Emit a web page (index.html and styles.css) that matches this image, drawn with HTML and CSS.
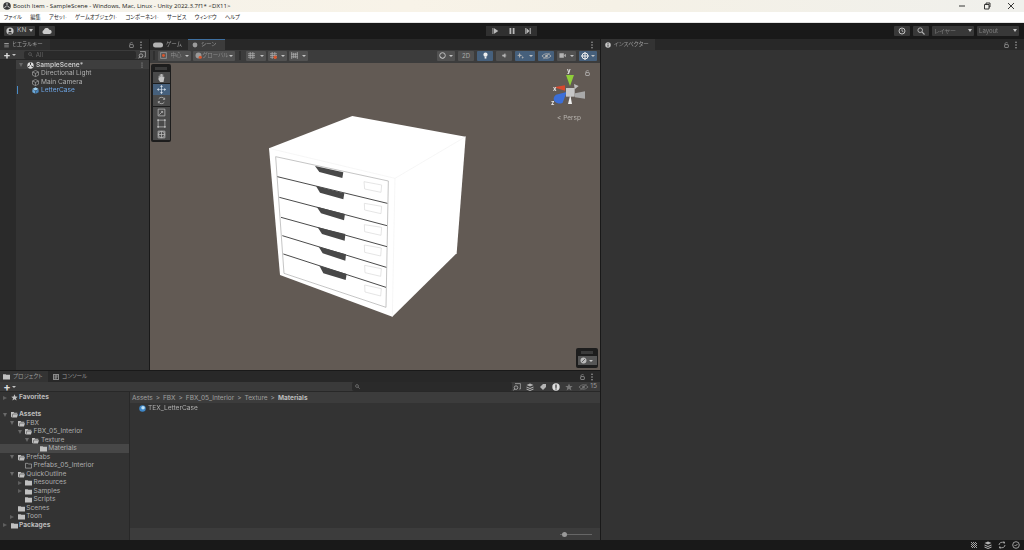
FILE: index.html
```html
<!DOCTYPE html>
<html lang="ja">
<head>
<meta charset="utf-8">
<title>Booth Item - SampleScene</title>
<link rel="stylesheet" href="styles.css">
</head>
<body>
<svg class="defs" width="0" height="0">
  <symbol id="folder" viewBox="0 0 8 7"><path d="M0 .8h3l.8.8H8V7H0z"/></symbol>
  <symbol id="folder-open" viewBox="0 0 8 7"><path d="M0 .6h3l.7.8h3.500v1.200H2L.8 6.600H0zM2.400 3.300H8L6.800 6.800H1.200z"/></symbol>
  <symbol id="folder-line" viewBox="0 0 8 7"><path d="M.5 1h2.600l.7.8h3.700v4.700H.5z" fill="none" stroke="currentColor" stroke-width=".7"/></symbol>
  <symbol id="cube" viewBox="0 0 8 8"><path d="M4 .5 7.400 2.200v3.700L4 7.600.6 5.900V2.200zM.6 2.200 4 3.900l3.400-1.700M4 3.900v3.700" fill="none" stroke="currentColor" stroke-width=".7"/></symbol>
  <symbol id="cube-solid" viewBox="0 0 8 8"><path d="M4 .4 7.600 2.200 4 4 .4 2.200z" fill="#9fd0f0"/><path d="M.4 2.600 3.800 4.400v3.300L.4 6z" fill="#6aa9dc"/><path d="M7.600 2.600 4.200 4.400v3.300L7.600 6z" fill="#4a86bd"/></symbol>
  <symbol id="unity" viewBox="0 0 8 8"><circle cx="4" cy="4" r="3.600" fill="#ddd"/><path d="M4 .8v2.400M1.200 5.600l2-1.200M6.800 5.600l-2-1.200" stroke="#222" stroke-width="1.100"/></symbol>
  <symbol id="lock" viewBox="0 0 6 7"><path d="M1.200 3V1.900a1.800 1.500 0 0 1 3.400-.5" fill="none" stroke="currentColor" stroke-width=".7"/><rect x=".8" y="3" width="4.400" height="3.500" rx=".5" fill="none" stroke="currentColor" stroke-width=".8"/></symbol>
  <symbol id="dots" viewBox="0 0 2 8"><circle cx="1" cy="1.200" r=".7"/><circle cx="1" cy="4" r=".7"/><circle cx="1" cy="6.800" r=".7"/></symbol>
  <symbol id="search" viewBox="0 0 8 8"><circle cx="3.200" cy="3.200" r="2.300" fill="none" stroke="currentColor"/><path d="m5 5 2.500 2.500" stroke="currentColor" stroke-width="1.100"/></symbol>
  <symbol id="search-box" viewBox="0 0 8 8"><path d="M2 .6h5.400v5.400H6.200M1 6.800" fill="none" stroke="currentColor" stroke-width=".7"/><circle cx="3" cy="4.600" r="1.800" fill="none" stroke="currentColor" stroke-width=".8"/><path d="M1.700 6 .4 7.400" stroke="currentColor" stroke-width=".9"/></symbol>
  <symbol id="eye-off" viewBox="0 0 12 8"><path d="M1 4q5-5 10 0-5 5-10 0z" fill="none" stroke="currentColor" stroke-width=".9"/><circle cx="6" cy="4" r="1.500"/><path d="M2.500 7.500 9.500.5" stroke="currentColor" stroke-width=".9"/></symbol>
  <symbol id="star" viewBox="0 0 8 8"><path d="m4 .4 1.100 2.500 2.600.2-2 1.700.7 2.700L4 6.100 1.600 7.500l.7-2.700-2-1.700 2.600-.2z"/></symbol>
  <symbol id="stack" viewBox="0 0 8 8"><path d="M4 .5 7.500 2 4 3.500.5 2zM.5 3.500 4 5l3.500-1.500v1L4 6 .5 4.500zM.5 5.500 4 7l3.500-1.500v1L4 8 .5 6.500z"/></symbol>
  <symbol id="grid-snap" viewBox="0 0 8 8"><path d="M2.500 0v8M5.500 0v8M0 2h8M0 4h8M0 6h8" stroke="currentColor" stroke-width=".8"/></symbol>
  <symbol id="ladder" viewBox="0 0 8 8"><path d="M.8 0v8M7.200 0v8M3 1v6M5 1v6M0 2.500h8M0 5.500h8" stroke="currentColor" stroke-width=".8"/></symbol>
</svg>

<header class="title-bar">
  <svg class="title-logo" viewBox="0 0 8 8"><circle cx="4" cy="4" r="3.800" fill="#3a3a3a"/><path d="M4 1v2.400M1.400 5.500l2.100-1.300M6.600 5.500 4.500 4.200" stroke="#eee" stroke-width=".9"/></svg>
  <span class="title-text">Booth Item - SampleScene - Windows, Mac, Linux - Unity 2022.3.7f1* &lt;DX11&gt;</span>
  <div class="win-controls">
    <svg class="win-btn" viewBox="0 0 8 8"><path d="M1 4h6"/></svg>
    <svg class="win-btn" viewBox="0 0 8 8"><path d="M1.500 2.500h4.500v4.500h-4.500zM3 2.500V1h4v4H6"/></svg>
    <svg class="win-btn" viewBox="0 0 8 8"><path d="m1 1 6 6M7 1 1 7"/></svg>
  </div>
</header>

<nav class="menu-bar">
  <span>ファイル</span><span>編集</span><span>アセット</span><span>ゲームオブジェクト</span><span>コンポーネント</span><span>サービス</span><span>ウィンドウ</span><span>ヘルプ</span>
</nav>

<div class="main-toolbar">
  <div class="tb-left">
    <div class="tb-btn account">
      <svg class="ico8" viewBox="0 0 8 8"><circle cx="4" cy="4" r="3.600" fill="#c8c8c8"/><circle cx="4" cy="3" r="1.300" fill="#333"/><path d="M1.800 6.500a2.300 2 0 0 1 4.400 0z" fill="#333"/></svg>
      <span>KN</span><i class="caret"></i>
    </div>
    <div class="tb-btn cloud">
      <svg class="ico-cloud" viewBox="0 0 10 6"><path d="M2.200 6a2 2 0 0 1-.3-3.900 2.800 2.800 0 0 1 5.400-.3A2.100 2.100 0 0 1 7.800 6z"/></svg>
    </div>
  </div>
  <div class="play-group">
    <div class="play-btn"><svg class="ico8" viewBox="0 0 8 8"><path d="M1.500 1h.7v6h-.7zM2.800 1v6l4.500-3z"/></svg></div>
    <div class="play-btn"><svg class="ico8" viewBox="0 0 8 8"><path d="M1.500 1h1.800v6H1.500zM4.700 1h1.800v6H4.700z"/></svg></div>
    <div class="play-btn"><svg class="ico8" viewBox="0 0 8 8"><path d="M1 1h.7v6H1zM2.400 1v6l3-3zM5.700 1h1v6h-1z"/></svg></div>
  </div>
  <div class="tb-right">
    <div class="tb-btn hist"><svg class="ico8" viewBox="0 0 8 8"><circle cx="4" cy="4" r="3" fill="none" stroke="#ccc" stroke-width=".9"/><path d="M4 2.200V4l1.400.9" fill="none" stroke="#ccc" stroke-width=".8"/></svg></div>
    <div class="tb-btn hist"><svg class="ico8 soft" viewBox="0 0 8 8"><use href="#search"/></svg></div>
    <div class="tb-btn select"><span>レイヤー</span><i class="caret"></i></div>
    <div class="tb-btn select"><span>Layout</span><i class="caret"></i></div>
  </div>
</div>

<main class="workspace">
  <div class="left-col">
    <div class="top-row">
      <section class="hierarchy">
        <div class="tabs">
          <div class="tab tab-hier"><span class="tab-glyph">☰</span>ヒエラルキー</div>
          <div class="tab-tools">
            <svg class="lock"><use href="#lock"/></svg>
            <svg class="dots"><use href="#dots"/></svg>
          </div>
        </div>
        <div class="hier-search">
          <span class="plus">+</span><i class="caret small"></i>
          <div class="search-field"><svg class="ico5"><use href="#search"/></svg><span>All</span></div>
          <svg class="ico8 soft"><use href="#search-box"/></svg>
        </div>
        <div class="hier-tree">
          <div class="hier-scene">
            <i class="arrow down"></i>
            <svg class="ico7"><use href="#unity"/></svg>
            <b>SampleScene*</b>
            <svg class="dots scene-dots"><use href="#dots"/></svg>
          </div>
          <div class="hier-row"><svg class="ico7"><use href="#cube"/></svg>Directional Light</div>
          <div class="hier-row"><svg class="ico7"><use href="#cube"/></svg>Main Camera</div>
          <div class="hier-row active"><svg class="ico7"><use href="#cube-solid"/></svg>LetterCase<i class="hier-mark"></i></div>
        </div>
      </section>

      <section class="scene">
        <div class="tabs">
          <div class="tab tab-game"><svg class="ico-game" viewBox="0 0 10 6"><path d="M2.500.5h5a2.500 2.500 0 0 1 0 5h-5a2.500 2.500 0 0 1 0-5z"/></svg>ゲーム</div>
          <div class="tab tab-scene"><svg class="ico6" viewBox="0 0 8 8"><circle cx="4" cy="4" r="3.200"/></svg>シーン</div>
          <div class="tab-tools"><svg class="dots"><use href="#dots"/></svg></div>
        </div>
        <div class="scene-toolbar">
          <i class="grip"></i>
          <div class="st-group">
            <div class="st-btn w33"><svg class="ico7" viewBox="0 0 8 8"><rect x=".8" y=".8" width="6.400" height="6.400" fill="none" stroke="#999"/><circle cx="4" cy="4" r="1.700" fill="#d9572e"/></svg><span>中心</span><i class="caret small"></i></div>
            <div class="st-btn w42"><svg class="ico7" viewBox="0 0 8 8"><circle cx="4" cy="4" r="3.400" fill="#999"/><circle cx="6" cy="6" r="1.800" fill="#d9572e"/></svg><span>グローバル</span><i class="caret small"></i></div>
          </div>
          <i class="grip grip-gap"></i>
          <div class="st-group">
            <div class="st-btn w20"><svg class="ico7 soft"><use href="#grid-snap"/></svg><i class="caret small"></i></div>
            <div class="st-btn w19"><svg class="ico7 soft" viewBox="0 0 8 8"><use href="#grid-snap"/><circle cx="6" cy="6" r="1.900" fill="#d9572e"/></svg><i class="caret small"></i></div>
            <div class="st-btn w19"><svg class="ico7 soft"><use href="#ladder"/></svg><i class="caret small"></i></div>
          </div>
          <div class="st-group st-right">
            <div class="st-btn w18"><svg class="ico7" viewBox="0 0 8 8"><circle cx="4" cy="4" r="3.200" fill="none" stroke="#ccc"/><path d="M1 4.500a3 3 0 0 0 5.500 1.500 4 4 0 0 1-5.500-1.500z" fill="#ccc"/></svg><i class="caret small"></i></div>
            <div class="st-btn w16 text2d">2D</div>
            <div class="st-btn w16 on"><svg class="ico7" viewBox="0 0 8 8"><circle cx="4" cy="3" r="2.400" fill="#eee"/><rect x="3" y="5.200" width="2" height="2.300" fill="#eee"/></svg></div>
            <div class="st-btn w16"><svg class="ico5 soft" viewBox="0 0 8 8"><path d="M1 3h1.500L5 1v6L2.500 5H1zM6 2.500v3" stroke="currentColor"/></svg></div>
            <div class="st-btn w20 on"><svg class="ico7 soft" viewBox="0 0 8 8"><path d="M3 .5 3.800 3l2.500.8-2.500.8L3 7l-.8-2.400L0 3.800 2.200 3zM6.500 4.500l.5 1.200 1 .5-1 .5-.5 1.300-.5-1.300-1-.5 1-.5z"/></svg><i class="caret small"></i></div>
            <div class="st-btn w16 on"><svg class="ico9 soft" viewBox="0 0 12 8"><use href="#eye-off"/></svg></div>
            <div class="st-btn w19"><svg class="ico7 soft" viewBox="0 0 8 8"><path d="M.5 1.500h5v5h-5zM6 3.500 7.800 2v4L6 4.500z"/></svg><i class="caret small"></i></div>
            <div class="st-btn w18 on"><svg class="ico8" viewBox="0 0 8 8"><circle cx="4" cy="4" r="3" fill="none" stroke="#eee"/><path d="M4 0v8M0 4h8" stroke="#eee"/></svg><i class="caret small"></i></div>
          </div>
        </div>
        <div class="scene-view">
          <svg class="scene-art" viewBox="150 63 450 307">
            <g transform="translate(260 110) scale(.33333)">
              <path class="c-body" d="M277 18 617 80 590 430 397 620 60 495 27 115z"/>
              <path class="c-edge" d="M27 115 405 205 617 80M405 205 397 620"/>
              <path class="c-frame" d="M47 140 385 213 378 592 72 490z"/>
              <path class="c-line" d="M52 200 382 280M58 262 381 347M63 322 381 410M67 377 379 472M70 432 378 532"/>
              <path class="c-handle" d="M165 168 250 187 247 204 178 186z"/>
              <path class="c-handle" d="M168 228 253 250 250 268 180 248z"/>
              <path class="c-handle" d="M170 290 255 312 252 331 183 310z"/>
              <path class="c-handle" d="M173 352 256 372 254 392 186 372z"/>
              <path class="c-handle" d="M176 410 258 433 256 452 188 430z"/>
              <path class="c-handle" d="M178 467 260 492 257 510 190 490z"/>
              <path class="c-label" d="M312 215 365 225 363 247 314 237z"/>
              <path class="c-label" d="M313 280 365 289 363 311 314 300z"/>
              <path class="c-label" d="M313 344 365 352 363 376 314 365z"/>
              <path class="c-label" d="M313 405 364 414 362 438 314 427z"/>
              <path class="c-label" d="M314 466 364 476 362 499 315 488z"/>
              <path class="c-label" d="M314 525 364 536 362 558 315 546z"/>
            </g>
            <g transform="translate(530 60) scale(.33333)">
              <path d="M108 45h24l-12 33z" fill="#8fce3a"/>
              <path d="M72 82 105 76 105 92z" fill="#d8492e"/>
              <path d="M110 96 78 104a16 14 0 0 0 20 24z" fill="#3c6fd8"/>
              <path d="M165 94 135 100 135 112 165 116z" fill="#a9a9a9"/>
              <path d="M114 132h12L121 104z" fill="#eee"/>
              <path d="M132 72 146 78 134 88z" fill="#bdbdbd"/>
              <rect x="108" y="84" width="26" height="26" fill="#c6c6c6"/>
            </g>
          </svg>
          <div class="axis axis-y">y</div>
          <div class="axis axis-x">x</div>
          <div class="axis axis-z">z</div>
          <svg class="gizmo-lock"><use href="#lock"/></svg>
          <div class="persp">&lt; Persp</div>
          <div class="tools">
            <i class="tools-grip"></i>
            <div class="tool"><svg class="ico9t" viewBox="0 0 8 8"><path d="M1.500 4V2.500h.7V4h.3V1.200h.8V3.500h.3V.8h.8v2.700h.3V1.200h.8v2.800l.5-.8.6.4L5.800 8H2.700L1.200 5.500z"/></svg></div>
            <div class="tool on"><svg class="ico9t" viewBox="0 0 8 8"><path d="M4 0 5.300 1.500H2.700zM4 8 2.700 6.500h2.600zM0 4l1.500-1.300v2.600zM8 4 6.500 2.700v2.600zM3.700 1.500h.6v5h-.6zM1.500 3.700h5v.6h-5z"/></svg></div>
            <div class="tool"><svg class="ico9t ln" viewBox="0 0 8 8"><path d="M6.800 3A3 3 0 0 0 1.500 2.500M1.200 5A3 3 0 0 0 6.500 5.500M6.800 1.500V3H5.300M1.200 6.500V5h1.500"/></svg></div>
            <div class="tool"><svg class="ico9t ln" viewBox="0 0 8 8"><path d="M1 1h6v6H1z"/><path d="M2 6l3-3M3.500 3H5v1.500"/></svg></div>
            <div class="tool"><svg class="ico9t ln" viewBox="0 0 8 8"><path d="M1 1h6v6H1z"/><path class="corner" d="M.3.3h1.400v1.400H.3zM6.300.3h1.400v1.400H6.300zM.3 6.300h1.400v1.400H.3zM6.300 6.300h1.400v1.400H6.300z"/></svg></div>
            <div class="tool"><svg class="ico9t ln" viewBox="0 0 8 8"><circle cx="4" cy="4" r="2.800"/><path d="M1 1h6v6H1zM4 1v6M1 4h6"/></svg></div>
          </div>
          <div class="orient">
            <i class="tools-grip"></i>
            <div class="orient-btn"><svg class="ico7" viewBox="0 0 8 8"><circle cx="4" cy="4" r="3.400" fill="#bbb"/><path d="M2 6 6 2" stroke="#555"/></svg><i class="caret small"></i></div>
          </div>
        </div>
      </section>
    </div>

    <section class="project">
      <div class="tabs">
        <div class="tab tab-proj"><svg class="ico7 lite"><use href="#folder"/></svg>プロジェクト</div>
        <div class="tab-plain"><svg class="ico6 lite" viewBox="0 0 8 8"><path d="M.5.500h7v7h-7zM2 2.500h4M2 4h4M2 5.500h3" fill="none" stroke="currentColor"/></svg>コンソール</div>
        <div class="tab-tools">
          <svg class="lock"><use href="#lock"/></svg>
          <svg class="dots"><use href="#dots"/></svg>
        </div>
      </div>
      <div class="proj-toolbar">
        <span class="plus">+</span><i class="caret small"></i>
        <div class="proj-search"><svg class="ico5"><use href="#search"/></svg></div>
        <div class="proj-icons">
          <svg class="ico8 soft"><use href="#search-box"/></svg>
          <svg class="ico8 soft"><use href="#stack"/></svg>
          <svg class="ico8 soft" viewBox="0 0 8 8"><path d="M1 4 4 1h3v3L4 7z"/></svg>
          <svg class="ico8" viewBox="0 0 8 8"><circle cx="4" cy="4" r="3.700" fill="#ddd"/><rect x="3.400" y="1.500" width="1.200" height="3.400" fill="#333"/><rect x="3.400" y="5.400" width="1.200" height="1.200" fill="#333"/></svg>
          <svg class="ico8 dim"><use href="#star"/></svg>
          <span class="hidden-count"><svg class="ico9 dim" viewBox="0 0 12 8"><use href="#eye-off"/></svg>15</span>
        </div>
      </div>
      <div class="proj-body">
        <div class="proj-tree">
          <div class="row bold"><i class="arrow"></i><svg class="ico7 lite"><use href="#star"/></svg>Favorites</div>
          <div class="row"></div>
          <div class="row bold"><i class="arrow down"></i><svg class="ico7 lite"><use href="#folder-open"/></svg>Assets</div>
          <div class="row d1"><i class="arrow down"></i><svg class="ico7 lite"><use href="#folder-open"/></svg>FBX</div>
          <div class="row d2"><i class="arrow down"></i><svg class="ico7 lite"><use href="#folder-open"/></svg>FBX_05_Interior</div>
          <div class="row d3"><i class="arrow down"></i><svg class="ico7 lite"><use href="#folder-open"/></svg>Texture</div>
          <div class="row d4 selected"><i class="arrow none"></i><svg class="ico7 lite"><use href="#folder"/></svg>Materials</div>
          <div class="row d1"><i class="arrow down"></i><svg class="ico7 lite"><use href="#folder-open"/></svg>Prefabs</div>
          <div class="row d2"><i class="arrow none"></i><svg class="ico7 lite"><use href="#folder-line"/></svg>Prefabs_05_Interior</div>
          <div class="row d1"><i class="arrow down"></i><svg class="ico7 lite"><use href="#folder-open"/></svg>QuickOutline</div>
          <div class="row d2"><i class="arrow"></i><svg class="ico7 lite"><use href="#folder"/></svg>Resources</div>
          <div class="row d2"><i class="arrow"></i><svg class="ico7 lite"><use href="#folder"/></svg>Samples</div>
          <div class="row d2"><i class="arrow none"></i><svg class="ico7 lite"><use href="#folder"/></svg>Scripts</div>
          <div class="row d1"><i class="arrow none"></i><svg class="ico7 lite"><use href="#folder"/></svg>Scenes</div>
          <div class="row d1"><i class="arrow"></i><svg class="ico7 lite"><use href="#folder"/></svg>Toon</div>
          <div class="row bold"><i class="arrow"></i><svg class="ico7 lite"><use href="#folder"/></svg>Packages</div>
        </div>
        <div class="proj-list">
          <div class="crumbs"><span>Assets</span><i>&gt;</i><span>FBX</span><i>&gt;</i><span>FBX_05_Interior</span><i>&gt;</i><span>Texture</span><i>&gt;</i><b>Materials</b></div>
          <div class="assets">
            <div class="asset"><svg class="ico7" viewBox="0 0 8 8"><circle cx="4" cy="4" r="3.700" fill="#3e86c6"/><circle cx="4.600" cy="3.200" r="2" fill="#bfe2f7"/></svg>TEX_LetterCase</div>
          </div>
          <div class="list-foot"><div class="slider"><i class="slider-knob"></i></div></div>
        </div>
      </div>
    </section>
  </div>

  <section class="inspector">
    <div class="tabs">
      <div class="tab tab-insp"><svg class="ico6" viewBox="0 0 8 8"><circle cx="4" cy="4" r="3.700" fill="#c8c8c8"/><rect x="3.400" y="3.300" width="1.200" height="3" fill="#333"/><rect x="3.400" y="1.600" width="1.200" height="1.100" fill="#333"/></svg>インスペクター</div>
      <div class="tab-tools">
        <svg class="lock"><use href="#lock"/></svg>
        <svg class="dots"><use href="#dots"/></svg>
      </div>
    </div>
    <div class="insp-body"></div>
  </section>
</main>

<footer class="status">
  <svg class="ico8 soft" viewBox="0 0 8 8"><path d="M1 1 7 7M1 3l4 4M3 1l4 4M1 5l2 2M5 1l2 2" stroke="currentColor" stroke-width=".9"/></svg>
  <svg class="ico8 soft"><use href="#stack"/></svg>
  <svg class="ico8 ln-s" viewBox="0 0 8 8"><path d="M1 4a3 3 0 0 1 5-2M7 4a3 3 0 0 1-5 2M5 1h1.500v1.500M3 7H1.500V5.500"/></svg>
  <svg class="ico8 ln-s" viewBox="0 0 8 8"><circle cx="4" cy="4" r="3.300"/><path d="m2.500 4 1 1 2-2"/></svg>
</footer>
</body>
</html>
```

FILE: styles.css
```css
* { box-sizing: border-box; }
html, body { margin: 0; padding: 0; }
body {
  width: 1024px;
  height: 550px;
  overflow: hidden;
  display: flex;
  flex-direction: column;
  background: #191919;
  color: #b4b4b4;
  font-family: "Inter", "Noto Sans CJK JP", sans-serif;
  font-size: 6.600px;
  line-height: 1;
  white-space: nowrap;
  font-feature-settings: "palt";
  filter: blur(.3px);
}
.defs { position: absolute; }
svg { fill: currentColor; flex: none; }

/* window chrome */
.title-bar {
  height: 12px;
  display: flex;
  align-items: center;
  padding-left: 3px;
  color: #222;
  background: linear-gradient(90deg, #f4f2ea 0%, #f8f3e8 40%, #f5f1e6 60%, #f0f0ec 100%);
}
.title-logo { width: 8px; height: 8px; margin-right: 2px; }
.title-text { font-family: "Open Sans", sans-serif; font-size: 6.100px; }
.win-controls { margin-left: auto; display: flex; gap: 16.500px; padding-right: 9px; }
.win-btn { width: 8px; height: 8px; fill: none; stroke: #222; stroke-width: .9; }
.menu-bar {
  height: 11px;
  display: flex;
  align-items: center;
  gap: 8.300px;
  padding-left: 4px;
  background: #fff;
  color: #222;
  font-family: "Noto Sans CJK JP", sans-serif;
  font-size: 5.200px;
  border-bottom: 1px solid #e4e4e4;
}

/* main toolbar */
.main-toolbar {
  height: 16px;
  display: grid;
  grid-template-columns: 1fr auto 1fr;
  align-items: center;
  padding: 0 5px 1px 4px;
  background: #191919;
}
.tb-left { display: flex; gap: 4px; }
.tb-right { display: flex; gap: 3px; justify-content: flex-end; }
.tb-btn {
  height: 10px;
  display: flex;
  align-items: center;
  background: #383838;
  border-radius: 1px;
  color: #bbb;
}
.account { width: 31px; padding-left: 2px; gap: 3px; }
.cloud { width: 16px; justify-content: center; }
.ico-cloud { width: 10px; height: 6px; color: #ccc; }
.hist { width: 16px; justify-content: center; }
.select { width: 42px; padding: 0 2px; justify-content: space-between; font-size: 6px; color: #808080; }
.play-group { display: flex; }
.play-btn {
  width: 16.700px;
  height: 10px;
  display: flex;
  align-items: center;
  justify-content: center;
  background: #303030;
  color: #b8b8b8;
}
.caret {
  width: 0;
  height: 0;
  flex: none;
  border-left: 2.500px solid transparent;
  border-right: 2.500px solid transparent;
  border-top: 3px solid #c4c4c4;
}
.caret.small { border-left-width: 2px; border-right-width: 2px; border-top-width: 2.500px; }

/* icons */
.ico5 { width: 5px; height: 5px; }
.ico6 { width: 6px; height: 6px; }
.ico7 { width: 7px; height: 7px; }
.ico8 { width: 8px; height: 8px; }
.ico9 { width: 11px; height: 8px; }
.ico9t { width: 9px; height: 9px; }
.soft { color: #b4b4b4; }
.lite { color: #c0c0c0; }
.dim { color: #777; }
.ln { fill: none; stroke: #b8b8b8; stroke-width: .7; }
.ln .corner { fill: #b8b8b8; stroke: none; }
.ln-s { fill: none; stroke: #bbb; stroke-width: .8; }
.lock { width: 5px; height: 6px; color: #aaa; }
.dots { width: 2px; height: 8px; color: #bbb; }

/* workspace */
.workspace { height: 501px; display: flex; gap: 1px; }
.left-col { width: 600px; display: flex; flex-direction: column; gap: 1px; }
.top-row { height: 331px; display: flex; gap: 1px; }

.tabs {
  height: 11px;
  flex: none;
  display: flex;
  align-items: stretch;
  background: #282828;
  color: #9c9c9c;
  font-family: "Noto Sans CJK JP", sans-serif;
  font-size: 5.500px;
}
.tab { display: flex; align-items: center; gap: 3px; background: #333; }
.tab-tools { margin-left: auto; display: flex; align-items: center; gap: 6px; padding-right: 7px; }
.tab-glyph { font-size: 5px; color: #999; }

.hierarchy { width: 149px; display: flex; flex-direction: column; background: #333; }
.tab-hier { width: 50px; padding-left: 4px; background: #2e2e2e; }
.hier-search {
  height: 10px;
  display: flex;
  align-items: center;
  padding: 0 3px;
  background: #3b3b3b;
  border-bottom: 1px solid #262626;
}
.plus { width: 8px; font-size: 11px; font-weight: 700; color: #ddd; line-height: 8px; text-align: center; margin-right: 1px; }
.search-field {
  width: 115px;
  height: 8px;
  margin: 0 2px 0 8px;
  display: flex;
  align-items: center;
  gap: 3px;
  padding-left: 4px;
  background: #2a2a2a;
  border-radius: 2px;
  color: #666;
}
.search-field span { font-size: 6px; }
.hier-tree { flex: 1; display: flex; flex-direction: column; background: linear-gradient(90deg, #2a2a2a 16px, #333 16px); }
.hier-scene {
  height: 9px;
  margin-left: 16px;
  display: flex;
  align-items: center;
  gap: 2px;
  padding: 1px 6px 0 2px;
  background: #3e3e3e;
}
.hier-scene b { font-weight: 600; color: #c4c4c4; }
.scene-dots { margin-left: auto; width: 2px; height: 6px; }
.hier-row {
  height: 8.500px;
  margin-left: 16px;
  padding: .6px 0 0 16px;
  display: flex;
  align-items: center;
  gap: 2px;
  color: #b0b0b0;
  position: relative;
}
.hier-row.active { color: #6ea6e6; }
.hier-mark { position: absolute; left: 1px; top: 0; width: 1px; height: 8px; background: #4a8cc7; }
.arrow {
  width: 0;
  height: 0;
  flex: none;
  margin: 0 2px 0 1px;
  border-top: 2.500px solid transparent;
  border-bottom: 2.500px solid transparent;
  border-left: 4px solid #5f5f5f;
}
.arrow.down {
  border-left: 2.500px solid transparent;
  border-right: 2.500px solid transparent;
  border-top: 4px solid #6a6a6a;
  border-bottom: 0;
}
.arrow.none { border: 0; width: 7px; margin: 0; }

/* scene */
.scene { width: 450px; display: flex; flex-direction: column; background: #383838; }
.tab-game { width: 38px; padding-left: 3px; background: transparent; }
.ico-game { width: 10px; height: 6px; color: #b4b4b4; }
.tab-scene { width: 37px; padding-left: 4px; background: #3c3c3c; border-top: 1px solid #3e6fa0; }
.scene-toolbar {
  height: 13px;
  flex: none;
  display: flex;
  align-items: center;
  padding: 0 3px 2px 3px;
  background: #3c3c3c;
  font-family: "Noto Sans CJK JP", sans-serif;
  font-size: 5.500px;
  color: #8c8c8c;
}
.grip { width: 2px; height: 9px; margin-right: 3px; background: #2f2f2f; }
.grip-gap { margin: 0 5px 0 4px; }
.st-group { display: flex; gap: 2px; }
.st-right { margin-left: auto; gap: 3px; }
.st-btn {
  height: 10px;
  display: flex;
  align-items: center;
  justify-content: space-between;
  padding: 0 2px;
  background: #515151;
  border-radius: 1px;
}
.st-btn.on { background: #46607c; }
.text2d { justify-content: center; font-family: "Inter", sans-serif; font-size: 6px; color: #aaa; }
.w16 { width: 16px; justify-content: center; }
.w18 { width: 18px; }
.w19 { width: 19px; }
.w20 { width: 20px; }
.w33 { width: 33px; }
.w42 { width: 42px; }
.scene-view { flex: 1; position: relative; background: #625a54; overflow: hidden; }
.scene-art { display: block; width: 100%; height: 100%; }
.c-body { fill: #fff; }
.c-edge { fill: none; stroke: #f1f1f1; stroke-width: 2; }
.c-frame { fill: none; stroke: #a8a8a8; stroke-width: 2; }
.c-line { fill: none; stroke: #4a4a4a; stroke-width: 3; }
.c-handle { fill: #484848; }
.c-label { fill: #fff; stroke: #d8d8d8; stroke-width: 2; }
.axis { position: absolute; font-size: 6px; font-weight: 700; color: #e8e8e8; }
.axis-y { left: 417px; top: 5px; }
.axis-x { left: 403px; top: 23px; }
.axis-z { left: 401px; top: 37px; }
.gizmo-lock { position: absolute; left: 435px; top: 7px; width: 5px; height: 6px; color: #ccc; }
.persp { position: absolute; left: 407px; top: 52px; font-size: 6.500px; color: #b9b5b0; }
.tools {
  position: absolute;
  left: 1px;
  top: 1px;
  width: 20px;
  height: 78px;
  display: flex;
  flex-direction: column;
  align-items: center;
  gap: .4px;
  padding: 0 1px 1px;
  background: #1d1d1d;
  border-radius: 2px;
}
.tools-grip { width: 12px; height: 3px; margin: 3px 0 2px; background: #3a3a3a; flex: none; }
.tool {
  width: 17px;
  height: 11px;
  flex: none;
  display: flex;
  align-items: center;
  justify-content: center;
  background: #4a4a4a;
  color: #c4c4c4;
}
.tool.on { background: #46607c; color: #dfe8f2; }
.orient {
  position: absolute;
  left: 426px;
  top: 285px;
  width: 22px;
  height: 20px;
  display: flex;
  flex-direction: column;
  align-items: center;
  background: #1d1d1d;
  border-radius: 2px;
}
.orient-btn {
  width: 19px;
  height: 9px;
  display: flex;
  align-items: center;
  gap: 2px;
  padding-left: 2px;
  background: #565656;
}

/* project */
.project { height: 169px; display: flex; flex-direction: column; background: #333; }
.tab-proj { width: 48px; padding-left: 3px; background: #333; }
.tab-plain { display: flex; align-items: center; gap: 3px; padding-left: 5px; color: #999; }
.proj-toolbar {
  height: 10px;
  flex: none;
  display: flex;
  align-items: center;
  padding: 0 3px;
  background: #3a3a3a;
  border-bottom: 1px solid #282828;
}
.proj-search {
  width: 160px;
  height: 9px;
  margin-left: auto;
  display: flex;
  align-items: center;
  padding-left: 3px;
  background: #2a2a2a;
  border-radius: 2px;
  color: #888;
}
.proj-icons { display: flex; align-items: center; gap: 5px; margin-left: 1px; }
.hidden-count { display: flex; align-items: center; gap: 1px; font-size: 6.600px; color: #999; }
.proj-body { flex: 1; display: flex; gap: 1px; background: #282828; min-height: 0; }
.proj-tree { width: 129px; padding-top: 1px; background: #333; display: flex; flex-direction: column; }
.row {
  height: 8.500px;
  flex: none;
  display: flex;
  align-items: center;
  gap: 1.500px;
  padding-left: 2px;
  padding-top: .5px;
  color: #aeaeae;
}
.row.bold { font-weight: 700; color: #bcbcbc; }
.d1 { padding-left: 9.300px; }
.d2 { padding-left: 16.600px; }
.d3 { padding-left: 23.900px; }
.d4 { padding-left: 31.200px; }
.row.selected { background: #474747; }
.proj-list { flex: 1; display: flex; flex-direction: column; background: #333; }
.crumbs {
  height: 11px;
  flex: none;
  display: flex;
  align-items: center;
  gap: 3px;
  padding: 1px 0 0 2px;
  background: #3c3c3c;
  color: #a0a0a0;
  font-size: 6.500px;
}
.crumbs i { font-style: normal; color: #999; }
.crumbs b { font-weight: 700; color: #bcbcbc; }
.assets { flex: 1; padding: 1px 0 0 9px; }
.asset { height: 8.500px; display: flex; align-items: center; gap: 2px; color: #b0b0b0; }
.list-foot {
  height: 12px;
  flex: none;
  display: flex;
  align-items: center;
  justify-content: flex-end;
  padding-right: 8px;
  background: #3c3c3c;
}
.slider { width: 32px; height: 1px; background: #666; position: relative; }
.slider-knob { position: absolute; left: 2px; top: -2px; width: 5px; height: 5px; border-radius: 50%; background: #9a9a9a; }

/* inspector */
.inspector { flex: 1; display: flex; flex-direction: column; background: #333; }
.tab-insp { width: 54px; padding-left: 4px; }
.insp-body { flex: 1; }

/* status */
.status {
  height: 10px;
  flex: none;
  display: flex;
  align-items: center;
  justify-content: flex-end;
  gap: 6px;
  padding-right: 4px;
  background: #191919;
}
```
